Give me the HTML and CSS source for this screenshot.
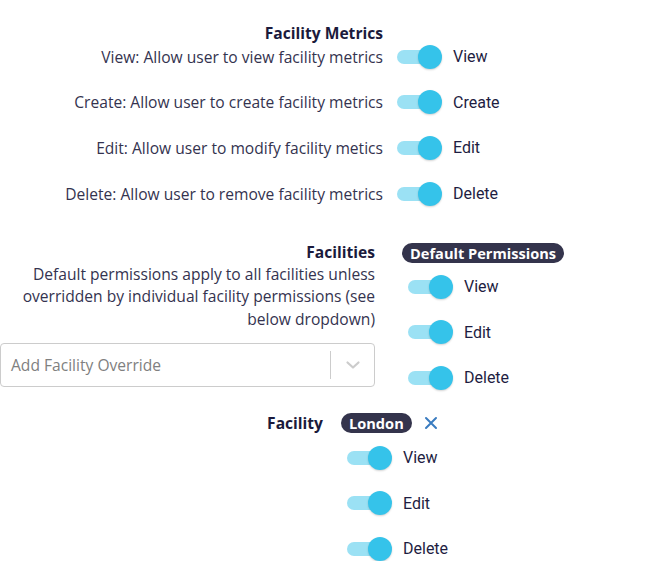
FILE: index.html
```html
<!DOCTYPE html>
<html>
<head>
<meta charset="utf-8">
<link rel="stylesheet" href="styles.css">
</head>
<body>
<div class="page">
  <section class="metrics">
    <div class="heading m-head">Facility Metrics</div>
    <div class="m-spacer"></div>

    <div class="desc">View: Allow user to view facility metrics</div>
    <div class="toggle"><span class="switch"><span class="track"></span><span class="thumb"></span></span><span class="tlabel">View</span></div>

    <div class="desc">Create: Allow user to create facility metrics</div>
    <div class="toggle"><span class="switch"><span class="track"></span><span class="thumb"></span></span><span class="tlabel">Create</span></div>

    <div class="desc">Edit: Allow user to modify facility metics</div>
    <div class="toggle"><span class="switch"><span class="track"></span><span class="thumb"></span></span><span class="tlabel">Edit</span></div>

    <div class="desc">Delete: Allow user to remove facility metrics</div>
    <div class="toggle"><span class="switch"><span class="track"></span><span class="thumb"></span></span><span class="tlabel">Delete</span></div>
  </section>

  <section class="facilities">
    <div class="f-left">
      <div class="heading">Facilities</div>
      <p class="para">Default permissions apply to all facilities unless overridden by individual facility permissions (see below dropdown)</p>
      <div class="select">
        <span class="placeholder">Add Facility Override</span>
        <span class="sep"></span>
        <span class="chev"><svg width="20" height="20" viewBox="0 0 20 20"><path d="M4.5 7.5 L10 12.5 L15.5 7.5" fill="none" stroke="#cccccc" stroke-width="2.2" stroke-linecap="round" stroke-linejoin="round"/></svg></span>
      </div>
    </div>
    <div class="f-right">
      <span class="badge">Default Permissions</span>
      <div class="tlist">
        <div class="toggle"><span class="switch"><span class="track"></span><span class="thumb"></span></span><span class="tlabel">View</span></div>
        <div class="toggle"><span class="switch"><span class="track"></span><span class="thumb"></span></span><span class="tlabel">Edit</span></div>
        <div class="toggle"><span class="switch"><span class="track"></span><span class="thumb"></span></span><span class="tlabel">Delete</span></div>
      </div>
    </div>
  </section>

  <section class="facility">
    <div class="fa-left"><div class="heading">Facility</div></div>
    <div class="fa-right">
      <div class="badge-row">
        <span class="badge">London</span>
        <span class="close"><svg width="14" height="14" viewBox="0 0 14 14"><path d="M2 2 L12 12 M12 2 L2 12" stroke="#3a7cc0" stroke-width="2" stroke-linecap="round"/></svg></span>
      </div>
      <div class="tlist">
        <div class="toggle"><span class="switch"><span class="track"></span><span class="thumb"></span></span><span class="tlabel">View</span></div>
        <div class="toggle"><span class="switch"><span class="track"></span><span class="thumb"></span></span><span class="tlabel">Edit</span></div>
        <div class="toggle"><span class="switch"><span class="track"></span><span class="thumb"></span></span><span class="tlabel">Delete</span></div>
      </div>
    </div>
  </section>
</div>
</body>
</html>
```

FILE: styles.css
```css
* { box-sizing: border-box; }
html, body { margin: 0; padding: 0; background: #ffffff; }
body { font-family: "Open Sans", "Liberation Sans", sans-serif; color: #1c1b3d; }

.page { padding-top: 23px; width: 651px; }

.heading {
  font-weight: 700;
  font-size: 15.6px;
  line-height: 20px;
  color: #1b1a3c;
  text-align: right;
}

/* Section 1 */
.metrics {
  display: grid;
  grid-template-columns: 383px auto;
  column-gap: 14px;
  row-gap: 21.67px;
  align-items: center;
}
.metrics .m-head { margin-bottom: -20.67px; }
.metrics .m-spacer { margin-bottom: -20.67px; }
.desc {
  font-size: 15.6px;
  line-height: 24px;
  text-align: right;
  color: #34334f;
}

/* Toggle */
.toggle { display: flex; align-items: center; height: 24px; }
.switch { position: relative; width: 45px; height: 24px; flex: none; }
.track {
  position: absolute; left: 0; top: 5px;
  width: 40px; height: 14px; border-radius: 7px;
  background: #9be1f4;
}
.thumb {
  position: absolute; left: 21px; top: 0;
  width: 24px; height: 24px; border-radius: 50%;
  background: #35c3ea;
  box-shadow: 0 1px 2px rgba(0,0,0,0.18);
}
.tlabel {
  margin-left: 11px;
  font-family: Roboto, "Open Sans", sans-serif;
  font-size: 16px;
  color: #1e1d42;
}

/* Section 2 */
.facilities { display: flex; margin-top: 36px; }
.f-left { width: 375px; flex: none; }
.para {
  margin: 1px 0 0 0;
  font-size: 15.6px;
  line-height: 22.5px;
  text-align: right;
  color: #34334f;
}
.select {
  margin-top: 13px;
  height: 44px;
  border: 1px solid #cccccc;
  border-radius: 4px;
  display: flex;
  align-items: center;
}
.placeholder {
  flex: 1;
  padding-left: 10px;
  font-size: 15.6px;
  color: #808080;
}
.sep { width: 1px; height: 28px; background: #cccccc; }
.chev { width: 43px; display: flex; justify-content: center; align-items: center; }
.f-right { margin-left: 27px; }
.badge {
  display: inline-block;
  height: 20px;
  line-height: 20px;
  padding: 0 8px;
  border-radius: 10px;
  background: #34344c;
  color: #ffffff;
  font-weight: 700;
  font-size: 14.6px;
}
.tlist {
  margin-left: 6px;
  margin-top: 11px;
  display: flex;
  flex-direction: column;
  gap: 21.5px;
}

/* Section 3 */
.facility { display: flex; margin-top: 23px; }
.fa-left { width: 323px; flex: none; }
.fa-right { margin-left: 18px; }
.badge-row { display: flex; align-items: center; height: 20px; }
.close { margin-left: 12px; display: flex; align-items: center; }
.facility .tlist { margin-top: 13px; }
```
